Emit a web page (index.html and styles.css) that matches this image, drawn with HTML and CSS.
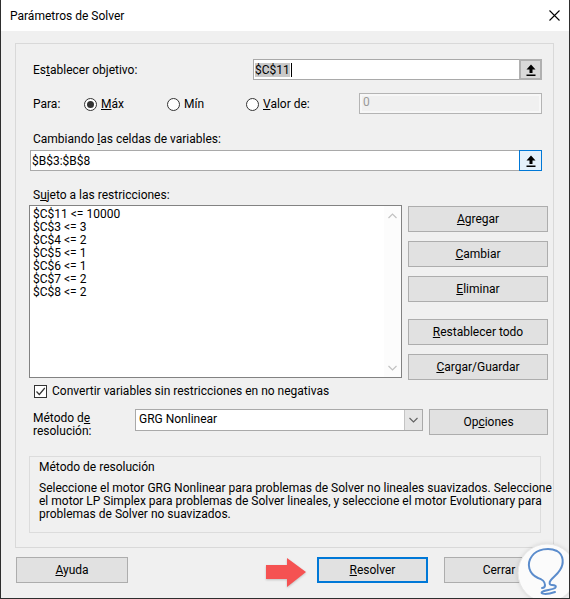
FILE: index.html
```html
<!DOCTYPE html>
<html lang="es">
<head>
<meta charset="utf-8">
<title>Parámetros de Solver</title>
<link rel="stylesheet" href="styles.css">
</head>
<body>
<div class="window">
  <div class="titlebar">
    <span class="title">Parámetros de Solver</span>
    <svg class="close" width="11" height="11" viewBox="0 0 11 11"><path d="M0.5 0.5 L10.5 10.5 M10.5 0.5 L0.5 10.5" stroke="#000" stroke-width="1.1" fill="none"/></svg>
  </div>

  <div class="panel">
    <div class="row row-obj">
      <span class="lbl lbl-obj">Es<u>t</u>ablecer objetivo:</span>
      <div class="ref ref-obj">
        <span class="val"><span class="sel">$C$11</span><span class="caret"></span></span>
        <span class="refbtn refbtn-gray">
          <svg width="10" height="12" viewBox="0 0 10 12"><path d="M5 0.5 L9.5 5.5 L6.5 5.5 L6.5 9 L3.5 9 L3.5 5.5 L0.5 5.5 Z" fill="#000"/><rect x="0.5" y="10.5" width="9" height="1.5" fill="#000"/></svg>
        </span>
      </div>
    </div>

    <div class="row row-para">
      <span class="lbl lbl-para">Para:</span>
      <span class="radio-item ri-max"><span class="radio checked"></span><span><u>M</u>áx</span></span>
      <span class="radio-item ri-min"><span class="radio"></span><span>Mín</span></span>
      <span class="radio-item ri-val"><span class="radio"></span><span><u>V</u>alor de:</span></span>
      <span class="valor">0</span>
    </div>

    <div class="lbl lbl-block lbl-cambio">Cambiando <u>l</u>as celdas de variables:</div>
    <div class="ref ref-vars">
      <span class="val">$B$3:$B$8</span>
      <span class="refbtn refbtn-blue">
        <svg width="10" height="12" viewBox="0 0 10 12"><path d="M5 0.5 L9.5 5.5 L6.5 5.5 L6.5 9 L3.5 9 L3.5 5.5 L0.5 5.5 Z" fill="#000"/><rect x="0.5" y="10.5" width="9" height="1.5" fill="#000"/></svg>
      </span>
    </div>

    <div class="lbl lbl-block lbl-sujeto">S<u>u</u>jeto a las restricciones:</div>
    <div class="main">
      <div class="listbox">
        <div class="items">
          <div>$C$11 &lt;= 10000</div>
          <div>$C$3 &lt;= 3</div>
          <div>$C$4 &lt;= 2</div>
          <div>$C$5 &lt;= 1</div>
          <div>$C$6 &lt;= 1</div>
          <div>$C$7 &lt;= 2</div>
          <div>$C$8 &lt;= 2</div>
        </div>
        <div class="scrollbar">
          <svg width="9" height="6" viewBox="0 0 9 6"><path d="M0.5 5 L4.5 1 L8.5 5" stroke="#c2c2c2" stroke-width="1.2" fill="none"/></svg>
          <svg width="9" height="6" viewBox="0 0 9 6"><path d="M0.5 1 L4.5 5 L8.5 1" stroke="#c2c2c2" stroke-width="1.2" fill="none"/></svg>
        </div>
      </div>
      <div class="btncol">
        <button class="btn side"><u>A</u>gregar</button>
        <button class="btn side"><u>C</u>ambiar</button>
        <button class="btn side"><u>E</u>liminar</button>
        <button class="btn side gap-lg"><u>R</u>establecer todo</button>
        <button class="btn side"><u>C</u>argar/Guardar</button>
      </div>
    </div>

    <div class="row row-check">
      <span class="checkbox">
        <svg width="11" height="11" viewBox="0 0 11 11"><path d="M1.5 5.5 L4.3 8.5 L9.8 2" stroke="#333" stroke-width="1.2" fill="none"/></svg>
      </span>
      <span class="check-lbl">Convertir variables sin restricciones en no negativas</span>
    </div>

    <div class="row row-method">
      <span class="lbl lbl-method">Método d<u>e</u><br>resolución:</span>
      <div class="select">
        <span class="select-val">GRG Nonlinear</span>
        <span class="select-arrow">
          <svg width="9" height="6" viewBox="0 0 9 6"><path d="M0.5 1 L4.5 5 L8.5 1" stroke="#606060" stroke-width="1.1" fill="none"/></svg>
        </span>
      </div>
      <button class="btn opciones">Op<u>c</u>iones</button>
    </div>

    <div class="groupbox">
      <div class="gb-title">Método de resolución</div>
      <p class="gb-text">Seleccione el motor GRG Nonlinear para problemas de Solver no lineales suavizados. Seleccione<br>el motor LP Simplex para problemas de Solver lineales, y seleccione el motor Evolutionary para<br>problemas de Solver no suavizados.</p>
    </div>
  </div>

  <div class="footer">
    <button class="btn foot ayuda"><u>A</u>yuda</button>
    <button class="btn foot resolver"><u>R</u>esolver</button>
    <button class="btn foot cerrar">Cerrar</button>
  </div>

  <svg class="arrow" width="44" height="34" viewBox="0 0 44 34">
    <polygon points="1,8 22,8 22,1 41,15 22,30 22,22 1,22" fill="#f55252"/>
  </svg>

  <svg class="logo" width="62" height="62" viewBox="0 0 62 62">
    <circle cx="32" cy="31" r="29" fill="#fbfbfb" stroke="#e6e6e6" stroke-width="1"/>
    <path d="M23 36 C14 32 11 22 17 14 C22 7 34 5 42 9 C49 13 49 22 45 28 C42 33 38 35 36 38 C34 40 34 43 37 43 C40 43 42 44 40 46 C37 48 29 48 27 50 C25 52 31 53 40 50 M23 36 C27 37 30 40 30 43 C30 45 29 46 27 46" stroke="#5b8ccc" stroke-width="2" fill="none" stroke-linecap="round" stroke-linejoin="round"/>
  </svg>
</div>
</body>
</html>
```

FILE: styles.css
```css
* { box-sizing: border-box; }

html, body {
  margin: 0;
  padding: 0;
  background: #f0f0f0;
}

body {
  font-family: "Segoe UI", Roboto, "Noto Sans", sans-serif;
  font-size: 12px;
  color: #000;
}

.window {
  position: relative;
  width: 570px;
  height: 599px;
  background: #f0f0f0;
  border-left: 1px solid #2e2e2e;
  border-right: 1px solid #2e2e2e;
  border-bottom: 1px solid #2e2e2e;
  overflow: hidden;
}

u {
  text-decoration: underline;
  text-underline-offset: 1px;
}

/* Title bar */
.titlebar {
  height: 31px;
  background: #fff;
  display: flex;
  align-items: center;
  padding-left: 9px;
}

.title {
  font-size: 12px;
  line-height: 16px;
  margin-top: 1px;
}

.close {
  margin-left: auto;
  margin-right: 9px;
}

/* Main panel */
.panel {
  margin: 12px 0 0 14px;
  width: 539px;
  height: 505px;
  border: 1px solid #d9d9d9;
}

.row {
  display: flex;
  align-items: center;
}

.lbl {
  line-height: 16px;
  white-space: nowrap;
}

.row-obj {
  margin-top: 15px;
  height: 21px;
}

.lbl-obj {
  width: 237px;
  padding-left: 17px;
}

.ref {
  display: flex;
  align-items: stretch;
  height: 21px;
  background: #fff;
  border: 1px solid #a9a9a9;
}

.ref-obj {
  width: 289px;
}

.ref .val {
  flex: 1;
  display: flex;
  align-items: center;
  padding-left: 1px;
  line-height: 16px;
}

.sel {
  background: #c9c9c9;
  line-height: 14px;
}

.caret {
  display: inline-block;
  width: 1px;
  height: 14px;
  background: #000;
  margin-left: 1px;
}

.refbtn {
  width: 22px;
  display: flex;
  align-items: center;
  justify-content: center;
}

.refbtn-gray {
  background: #d9d9d9;
  border: 2px solid #b0b0b0;
  margin: -1px -1px -1px 0;
  width: 23px;
}

.refbtn-blue {
  background: #e5f1fb;
  border: 1px solid #0078d7;
  margin: -1px -1px -1px 0;
  width: 23px;
}

/* Para row */
.row-para {
  margin-top: 13px;
  height: 21px;
}

.lbl-para {
  width: 68px;
  padding-left: 17px;
  margin-top: 1px;
}

.radio-item {
  display: flex;
  align-items: center;
  gap: 4px;
  line-height: 16px;
  margin-top: 1px;
}

.ri-max { width: 83px; }
.ri-min { width: 79px; }
.ri-val { width: 113px; }

.radio {
  width: 13px;
  height: 13px;
  border: 1px solid #333;
  border-radius: 50%;
  background: #fff;
  display: flex;
  align-items: center;
  justify-content: center;
}

.radio.checked::after {
  content: "";
  width: 7px;
  height: 7px;
  border-radius: 50%;
  background: #333;
}

.valor {
  width: 183px;
  height: 21px;
  border: 1px solid #b4b4b4;
  background: #f0f0f0;
  box-shadow: inset 0 0 0 2px #f7f7f7;
  color: #9a9a9a;
  padding-left: 3px;
  line-height: 17px;
}

/* Cambiando */
.lbl-block {
  padding-left: 17px;
}

.lbl-cambio {
  margin-top: 17px;
}

.ref-vars {
  margin-top: 3px;
  margin-left: 14px;
  width: 512px;
}

.lbl-sujeto {
  margin-top: 16px;
}

/* List + buttons */
.main {
  display: flex;
  margin-top: 2px;
}

.listbox {
  margin-left: 13px;
  width: 373px;
  height: 173px;
  border: 1px solid #828282;
  background: #fff;
  display: flex;
}

.items {
  flex: 1;
  padding: 2px 0 0 3px;
  line-height: 13px;
}

.scrollbar {
  width: 17px;
  background: #fcfcfc;
  display: flex;
  flex-direction: column;
  align-items: center;
  justify-content: space-between;
  padding: 7px 0 6px;
}

.btncol {
  margin-left: 6px;
  width: 140px;
  display: flex;
  flex-direction: column;
  gap: 9px;
  padding-top: 1px;
}

.btn {
  font-family: inherit;
  font-size: 12px;
  color: #000;
  background: #e1e1e1;
  border: 1px solid #adadad;
  padding: 0;
  margin: 0;
  line-height: 16px;
  text-align: center;
}

.side {
  height: 26px;
}

.gap-lg {
  margin-top: 8px;
}

/* Checkbox row */
.row-check {
  margin-top: 3px;
  height: 16px;
}

.checkbox {
  margin-left: 18px;
  width: 13px;
  height: 13px;
  border: 1px solid #333;
  background: #fff;
  display: flex;
  align-items: center;
  justify-content: center;
}

.check-lbl {
  margin-left: 5px;
  line-height: 16px;
}

/* Method row */
.row-method {
  margin-top: 10px;
  height: 26px;
  align-items: flex-start;
}

.lbl-method {
  width: 119px;
  padding-left: 17px;
  padding-top: 3px;
  line-height: 13px;
}

.select {
  width: 288px;
  height: 22px;
  border: 1px solid #a9a9a9;
  background: #fff;
  display: flex;
}

.select-val {
  flex: 1;
  padding-left: 3px;
  line-height: 19px;
}

.select-arrow {
  width: 18px;
  background: #e5e5e5;
  border-left: 1px solid #c4c4c4;
  display: flex;
  align-items: center;
  justify-content: center;
}

.opciones {
  margin-left: 6px;
  width: 119px;
  height: 26px;
}

/* Group box */
.groupbox {
  margin-top: 21px;
  margin-left: 13px;
  width: 512px;
  height: 77px;
  border: 1px solid #dcdcdc;
  padding: 2px 0 0 9px;
}

.gb-title {
  line-height: 16px;
}

.gb-text {
  margin: 7px 0 0;
  line-height: 13px;
  white-space: nowrap;
}

/* Footer */
.footer {
  display: flex;
  margin-top: 9px;
}

.foot {
  height: 26px;
}

.ayuda {
  margin-left: 15px;
  width: 112px;
}

.resolver {
  margin-left: 189px;
  width: 111px;
  border: 2px solid #0078d7;
}

.cerrar {
  margin-left: 16px;
  width: 110px;
}

/* Overlays: annotation arrow and watermark logo */
.arrow {
  position: absolute;
  left: 264px;
  top: 557px;
  filter: drop-shadow(0 1px 1px rgba(0,0,0,0.2));
}

.logo {
  position: absolute;
  left: 514px;
  top: 542px;
  filter: drop-shadow(0 0 2px rgba(0,0,0,0.12));
}
```
